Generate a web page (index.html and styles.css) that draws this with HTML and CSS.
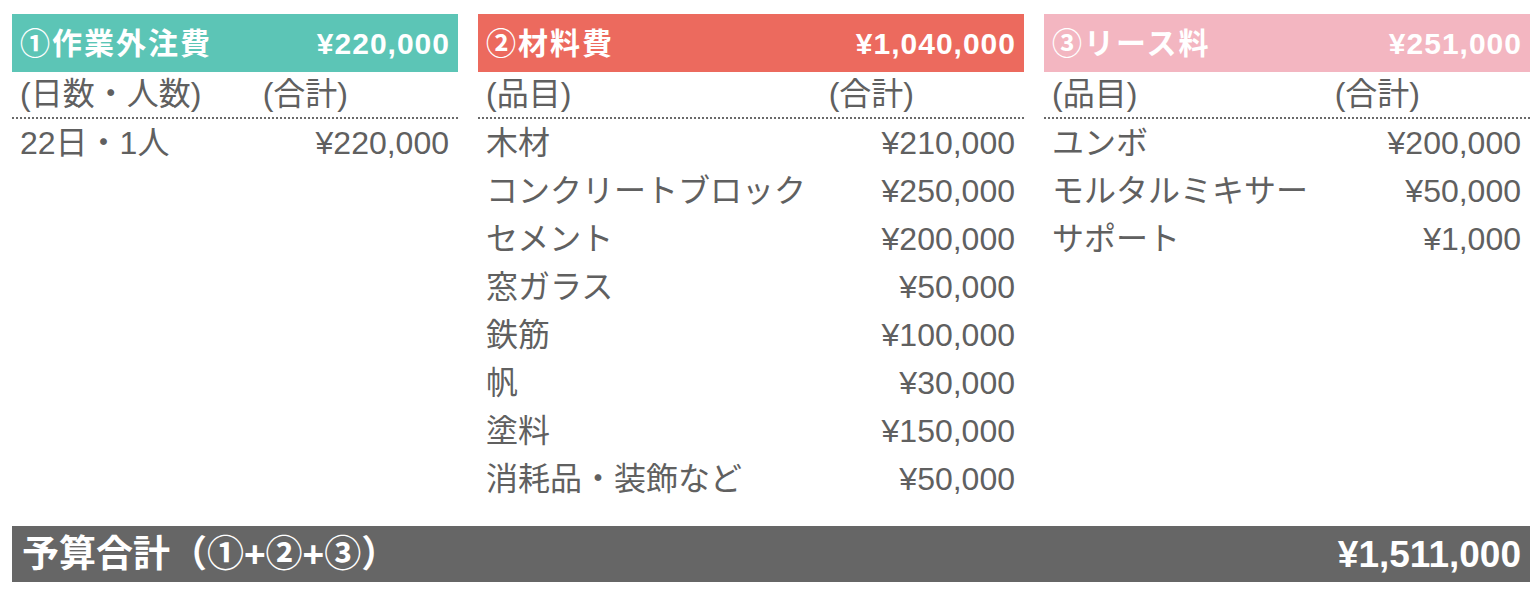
FILE: index.html
```html
<!DOCTYPE html>
<html lang="ja">
<head>
<meta charset="utf-8">
<title>予算</title>
<link rel="stylesheet" href="styles.css">
</head>
<body>
<div class="page">
  <div class="columns">
    <section class="panel">
      <div class="head teal"><span class="head-title">①作業外注費</span><span class="head-amount">¥220,000</span></div>
      <div class="subhead"><span>(日数・人数)</span><span class="sum-label">(合計)</span></div>
      <div class="row"><span>22日・1人</span><span>¥220,000</span></div>
    </section>
    <section class="panel">
      <div class="head red"><span class="head-title">②材料費</span><span class="head-amount">¥1,040,000</span></div>
      <div class="subhead"><span>(品目)</span><span class="sum-label">(合計)</span></div>
      <div class="row"><span>木材</span><span>¥210,000</span></div>
      <div class="row"><span>コンクリートブロック</span><span>¥250,000</span></div>
      <div class="row"><span>セメント</span><span>¥200,000</span></div>
      <div class="row"><span>窓ガラス</span><span>¥50,000</span></div>
      <div class="row"><span>鉄筋</span><span>¥100,000</span></div>
      <div class="row"><span>帆</span><span>¥30,000</span></div>
      <div class="row"><span>塗料</span><span>¥150,000</span></div>
      <div class="row"><span>消耗品・装飾など</span><span>¥50,000</span></div>
    </section>
    <section class="panel">
      <div class="head pink"><span class="head-title">③リース料</span><span class="head-amount">¥251,000</span></div>
      <div class="subhead"><span>(品目)</span><span class="sum-label">(合計)</span></div>
      <div class="row"><span>ユンボ</span><span>¥200,000</span></div>
      <div class="row"><span>モルタルミキサー</span><span>¥50,000</span></div>
      <div class="row"><span>サポート</span><span>¥1,000</span></div>
    </section>
  </div>
  <div class="total"><span>予算合計（①+②+③）</span><span>¥1,511,000</span></div>
</div>
</body>
</html>
```

FILE: styles.css
```css
html, body {
  margin: 0;
  padding: 0;
  background: #ffffff;
}
body {
  font-family: "Liberation Sans", "Noto Sans CJK JP", sans-serif;
  color: #606060;
}
.page {
  padding: 14px 10px 0 12px;
  width: 1518px;
}
.columns {
  display: grid;
  grid-template-columns: 446px 546px 486px;
  column-gap: 20px;
}
.head {
  height: 58px;
  box-sizing: border-box;
  display: flex;
  justify-content: space-between;
  align-items: baseline;
  padding: 1px 8px 0 8px;
  line-height: 57px;
  color: #ffffff;
  font-weight: bold;
}
.head-title {
  font-size: 30px;
  letter-spacing: 2px;
}
.head-amount {
  font-size: 30px;
  letter-spacing: 1px;
}
.teal { background: #5cc5b6; }
.red { background: #ec6a5e; }
.pink { background: #f3b6c1; }
.subhead {
  height: 47px;
  box-sizing: border-box;
  display: flex;
  justify-content: space-between;
  align-items: baseline;
  padding: 2px 9px 0 8px;
  line-height: 41px;
  font-size: 32px;
  border-bottom: 2px dotted #6a6a6a;
}
.sum-label {
  margin-right: 101px;
}
.row {
  height: 48px;
  box-sizing: border-box;
  display: flex;
  justify-content: space-between;
  align-items: baseline;
  padding: 2px 9px 0 8px;
  line-height: 44px;
  font-size: 32px;
}
.total {
  margin-top: 23px;
  height: 56px;
  box-sizing: border-box;
  background: #666666;
  color: #ffffff;
  display: flex;
  justify-content: space-between;
  align-items: baseline;
  padding: 1px 9px 0 10px;
  line-height: 55px;
  font-weight: bold;
  font-size: 37px;
}
```
